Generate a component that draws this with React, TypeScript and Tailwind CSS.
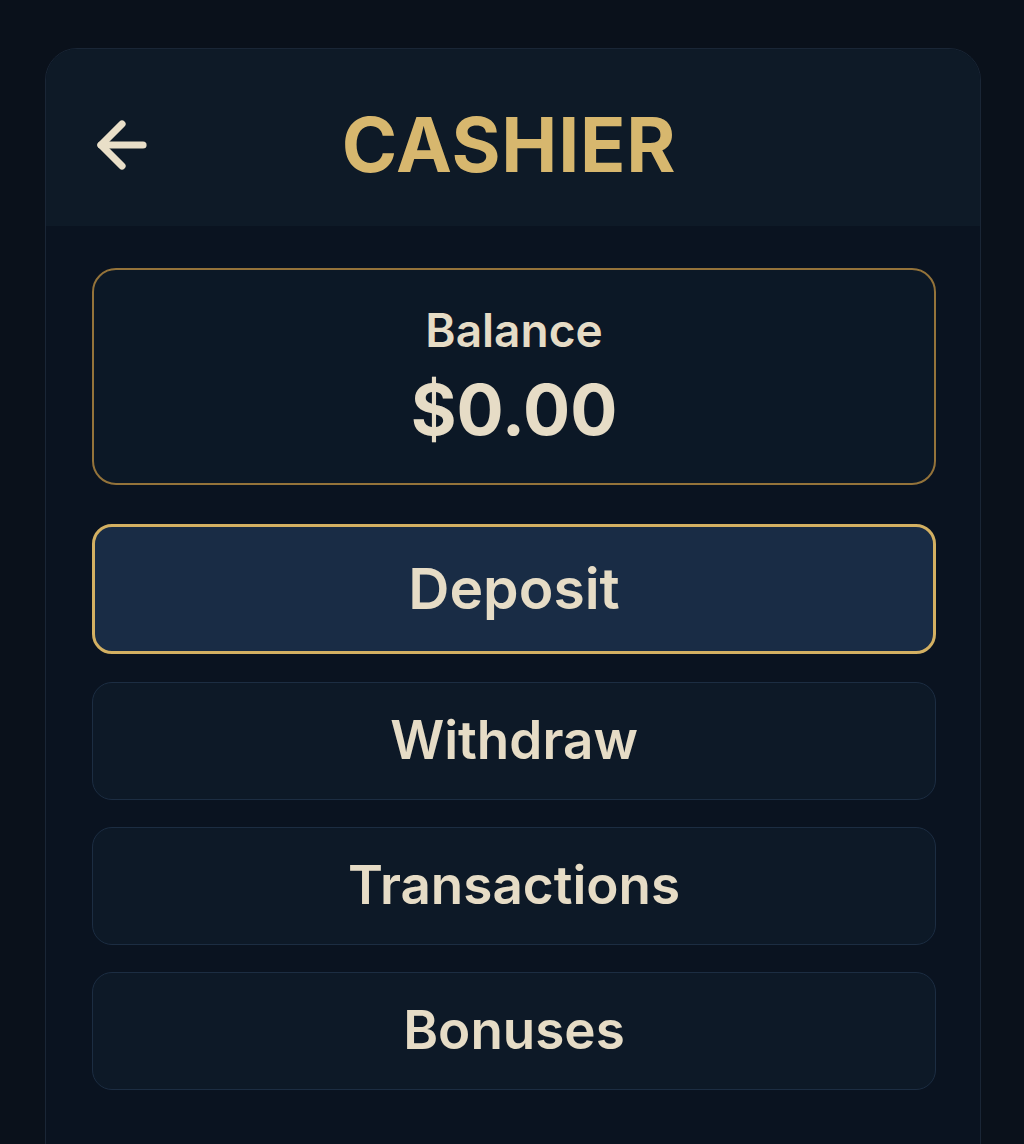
import { ArrowLeft } from 'lucide-react';

const actions = ['Withdraw', 'Transactions', 'Bonuses'];

export default function App() {
  return (
    <div
      className="min-h-[1144px] bg-[#0a111b] pt-12 overflow-hidden"
      style={{ fontFamily: 'Inter, "Noto Sans", sans-serif' }}
    >
      <div className="ml-[45px] w-[936px] h-[1110px] rounded-t-[32px] border border-[#1a2636] bg-[#0a1320] overflow-hidden">
        {/* Header */}
        <div className="relative h-[177px] bg-[#0e1a27] flex items-center justify-center">
          <button className="absolute left-[40px] top-[60px] text-[#e9dfc8]">
            <ArrowLeft size={72} strokeWidth={2.4} />
          </button>
          <h1 className="text-[75px] leading-none font-bold tracking-[0.01em] text-[#d7b76e] -ml-2 mt-[14px]">
            CASHIER
          </h1>
        </div>

        {/* Body */}
        <div className="pl-[46px] pt-[42px] flex flex-col w-[890px]">
          <div className="h-[217px] rounded-[24px] border-2 border-[#94733a] bg-[#0c1826] flex flex-col items-center justify-center">
            <span className="text-[46px] leading-none font-semibold text-[#e6dcc6] mt-[-2px]">Balance</span>
            <span className="text-[70px] leading-none font-bold text-[#e6dcc6] mt-[22px]">$0.00</span>
          </div>

          <button className="mt-[39px] h-[130px] rounded-[20px] border-[3px] border-[#d3b062] bg-[#192c45] text-[57px] font-semibold text-[#e6dcc6]">
            Deposit
          </button>

          <div className="mt-[28px] flex flex-col gap-[27px]">
            {actions.map((a) => (
              <button
                key={a}
                className="h-[118px] rounded-[20px] border border-[#1c2d42] bg-[#0d1927] text-[53px] font-semibold text-[#e6dcc6]"
              >
                {a}
              </button>
            ))}
          </div>
        </div>
      </div>
    </div>
  );
}
